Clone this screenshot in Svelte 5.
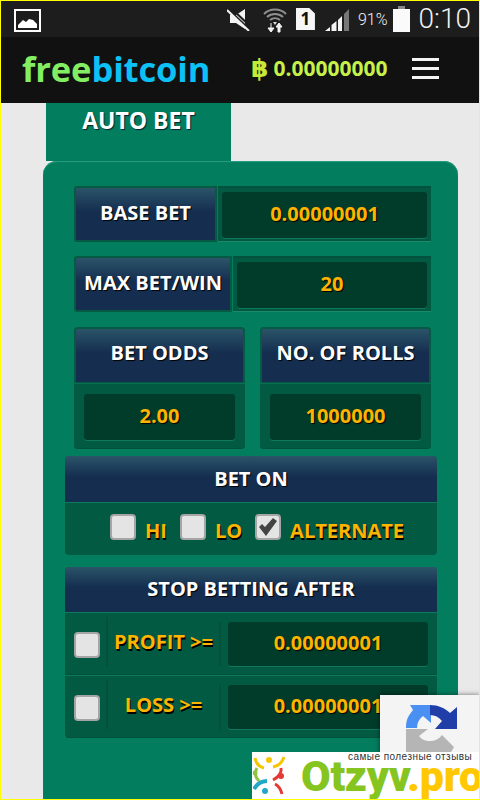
<script>
  let rows = [
    { label: 'PROFIT >=', value: '0.00000001' },
    { label: 'LOSS >=', value: '0.00000001' }
  ];
  let sides = [
    { label: 'HI', on: false },
    { label: 'LO', on: false },
    { label: 'ALTERNATE', on: true }
  ];
</script>

<div class="screen">
  <div class="status">
    <svg class="pic" width="27" height="23" viewBox="0 0 27 23">
      <rect x="1" y="1" width="25" height="21" fill="none" stroke="#fff" stroke-width="2" />
      <path d="M4 19v-3l5-5 3 2 3-3 4 1 4 4v4z" fill="#fff" />
    </svg>
    <div class="status-right">
      <svg class="mute" width="26" height="24" viewBox="0 0 26 24">
        <path d="M3 8h6l9-6v20l-9-6H3z" fill="#f4f4f4" />
        <path d="M1 2l22 21M4 1l22 21" stroke="#1d1d1d" stroke-width="2" />
        <path d="M0 3l22 21" stroke="#f4f4f4" stroke-width="2" />
      </svg>
      <svg width="24" height="27" viewBox="0 0 24 27">
        <path d="M1 8a16 16 0 0 1 22 0M4 11a12 12 0 0 1 16 0M7 14a8 8 0 0 1 10 0" fill="none" stroke="#8f8f8f" stroke-width="2" />
        <path d="M10 16h4l-2 3z" fill="#ddd" />
        <path d="M8 17v6M5 22h6l-3 4zM16 17l3 4h-2v5h-2v-5h-2z" fill="#f4f4f4" stroke="#f4f4f4" />
      </svg>
      <div class="sim">1</div>
      <svg width="24" height="25" viewBox="0 0 24 25">
        <path d="M0 24l5-4v4zM6.500 24v-6l5-4v10zM13 24v-11l4-4v15z" fill="#f4f4f4" />
        <path d="M19 24V7l5-5v22z" fill="#777" />
      </svg>
      <span class="pct">91%</span>
      <div class="battery"></div>
      <span class="clock">0:10</span>
    </div>
  </div>

  <header class="top">
    <div class="logo"><span class="free">free</span><span class="bitcoin">bitcoin</span></div>
    <div class="balance"><span class="coin">฿</span><span>0.00000000</span></div>
    <div class="burger"><i></i><i></i><i></i></div>
  </header>

  <div class="tab">AUTO BET</div>

  <main class="panel">
    <div class="line">
      <div class="head side base">BASE BET</div>
      <div class="well"><div class="field">0.00000001</div></div>
    </div>
    <div class="line">
      <div class="head side max">MAX BET/WIN</div>
      <div class="well"><div class="field">20</div></div>
    </div>
    <div class="pair">
      <div class="card">
        <div class="head tall">BET ODDS</div>
        <div class="well low"><div class="field">2.00</div></div>
      </div>
      <div class="card">
        <div class="head tall">NO. OF ROLLS</div>
        <div class="well low"><div class="field">1000000</div></div>
      </div>
    </div>

    <section class="block on">
      <div class="head wide">BET ON</div>
      <div class="choices">
        {#each sides as s}
          <div class="choice">
            <span class="box">
              {#if s.on}
                <svg width="20" height="20" viewBox="0 0 20 20"><path d="M1 10l3-3 3 3 8-9 4 3-11 15z" fill="#444" /></svg>
              {/if}
            </span>
            <span class="gold">{s.label}</span>
          </div>
        {/each}
      </div>
    </section>

    <section class="block stop">
      <div class="head wide">STOP BETTING AFTER</div>
      {#each rows as r}
        <div class="stop-row">
          <div class="tick"><span class="box"></span></div>
          <div class="gold what">{r.label}</div>
          <div class="field">{r.value}</div>
        </div>
      {/each}
    </section>
  </main>

  <div class="captcha">
    <svg width="54" height="52" viewBox="0 0 54 52">
      <path d="M2 26C2 18 4 14 9 8L6 3H27V21L19 14C15 17 13 21 13 26Z" fill="#4a90f2" />
      <path d="M26 3C34 3 41 6 46 11L53 5V27H31L38 19C35 15 31 13 26 13Z" fill="#1f3ea8" />
      <path d="M2 27H24L15 34C17 37 21 39 26 39V52H2Z" fill="#b5b5b5" />
      <path d="M26 39C31 39 35 37 38 33L50 45 46 52H26Z" fill="#b5b5b5" />
    </svg>
  </div>

  <div class="banner">
    <span class="tag">самые полезные отзывы</span>
    <svg class="people" width="34" height="40" viewBox="0 0 34 40">
      <circle cx="16" cy="4" r="3" fill="#f7c600" />
      <path d="M2 2c1 6 5 9 9 10M31 1c-2 6-6 9-11 10" fill="none" stroke="#f7c600" stroke-width="3" />
      <path d="M4 12c-3 5-2 9 2 13" fill="none" stroke="#8cc63f" stroke-width="3" />
      <circle cx="2" cy="17" r="2.500" fill="#8cc63f" />
      <path d="M1 33c3-5 8-8 13-8" fill="none" stroke="#22a7c9" stroke-width="4" />
      <circle cx="12" cy="35" r="3" fill="#22a7c9" />
      <path d="M20 24c6-3 9-8 8-12M22 28c4 2 6 6 7 10" fill="none" stroke="#e53935" stroke-width="3" />
      <circle cx="28" cy="20" r="3" fill="#e53935" />
    </svg>
    <span class="brand"><b>Otzyv</b><em>.pro</em></span>
  </div>
</div>

<style>
  :global(body) {
    margin: 0;
    background: #e9e9e9;
  }

  .screen {
    position: relative;
    width: 480px;
    height: 800px;
    overflow: hidden;
    box-sizing: border-box;
    border: 1px solid #ffff00;
    background: #e9e9e9;
    font-family: "Open Sans", "Liberation Sans", sans-serif;
    font-weight: 700;
  }

  .status {
    display: flex;
    align-items: center;
    justify-content: space-between;
    height: 36px;
    padding: 0 8px 0 13px;
    background: #1d1d1d;
    color: #f2f2f2;
  }

  .pic {
    margin-top: 2px;
  }

  .status-right {
    display: flex;
    align-items: center;
  }

  .mute {
    margin-right: 10px;
  }

  .sim {
    width: 19px;
    height: 22px;
    margin: 0 10px 0 9px;
    background: #f6f6f6;
    color: #111;
    font-size: 17px;
    line-height: 22px;
    text-align: center;
    clip-path: polygon(0 0, 70% 0, 100% 25%, 100% 100%, 0 100%);
  }

  .pct {
    margin-left: 9px;
    font-family: "Roboto", sans-serif;
    font-weight: 300;
    font-size: 16px;
  }

  .battery {
    position: relative;
    width: 17px;
    height: 23px;
    margin: 3px 9px 0 5px;
    background: #fafafa;
  }

  .battery::before {
    content: "";
    position: absolute;
    left: 5px;
    top: -3px;
    width: 7px;
    height: 3px;
    background: #888;
  }

  .clock {
    font-family: "Roboto", sans-serif;
    font-weight: 300;
    font-size: 28px;
    line-height: 30px;
  }

  .top {
    display: flex;
    align-items: center;
    height: 66px;
    padding: 0 40px 0 21px;
    background: #111;
  }

  .logo {
    flex: none;
    width: 229px;
    font-weight: 700;
    font-size: 34.500px;
    letter-spacing: -0.1px;
    margin-top: -3px;
  }

  .free {
    color: #84ee62;
  }

  .bitcoin {
    color: #0cc1f6;
  }

  .balance {
    display: flex;
    align-items: center;
    gap: 5px;
    color: #c6f04a;
    font-size: 21px;
    white-space: nowrap;
    margin-top: -4px;
  }

  .coin {
    font-family: "DejaVu Sans", sans-serif;
    font-weight: 700;
    font-size: 25px;
    line-height: 25px;
    color: #c6e838;
  }

  .burger {
    display: flex;
    flex-direction: column;
    gap: 6px;
    margin-left: 25px;
    margin-top: -3px;
  }

  .burger i {
    display: block;
    width: 27px;
    height: 3px;
    background: #f4f4f4;
  }

  .tab {
    box-sizing: border-box;
    width: 185px;
    height: 58px;
    margin-left: 45px;
    padding-top: 1px;
    background: #027e5f;
    color: #fff;
    font-size: 23px;
    font-weight: 700;
    text-align: center;
    text-shadow: 1px 1px 1px #023;
  }

  .panel {
    box-sizing: border-box;
    width: 415px;
    height: 640px;
    margin-left: 42px;
    padding: 25px 21px 0 22px;
    background: #027e5f;
    border-radius: 14px 14px 0 0;
    box-shadow: inset 0 1px 1px #2a9d80;
  }

  .line {
    display: flex;
    height: 56px;
    margin: 0 6px 0 9px;
  }

  .line + .line {
    margin: 14px 6px 15px 9px;
  }

  .head {
    display: flex;
    align-items: center;
    justify-content: center;
    box-sizing: border-box;
    padding-bottom: 3px;
    background: linear-gradient(#2a5468, #152e50 45%);
    color: #fff;
    font-size: 20px;
    font-weight: 700;
    text-shadow: 1px 1px 1px #000;
    border: 1px solid #045a43;
  }

  .side {
    flex: none;
    border-radius: 3px 0 0 3px;
    border-width: 2px;
  }

  .base {
    width: 143px;
    margin-right: 1px;
  }

  .max {
    width: 158px;
    margin-right: 1px;
  }

  .well {
    flex: 1;
    display: flex;
    box-sizing: border-box;
    padding: 4px 4px 3px;
    background: #035a42;
    border-top: 2px solid #03523d;
    border-bottom: 1px solid #1b8a6c;
  }

  .field {
    flex: 1;
    display: flex;
    align-items: center;
    justify-content: center;
    box-sizing: border-box;
    padding-bottom: 3px;
    background: #013c2a;
    border-radius: 3px;
    color: #fdb400;
    font-size: 20px;
    font-weight: 700;
    text-shadow: 1px 1px 1px #000;
    box-shadow: 0 1px 0 #10785c;
  }

  .pair {
    display: flex;
    gap: 15px;
    margin: 0 6px 7px 9px;
  }

  .card {
    flex: 1;
    display: flex;
    flex-direction: column;
    height: 122px;
    border-radius: 3px;
    overflow: hidden;
  }

  .tall {
    height: 56px;
    padding-bottom: 7px;
    border-width: 2px 2px 1px;
    border-radius: 3px 3px 0 0;
  }

  .low {
    padding: 10px 10px 8px;
    border-top: 1px solid #0a6e53;
    border-radius: 0 0 3px 3px;
    border-bottom: 1px solid #03503b;
  }

  .block {
    width: 372px;
    border-radius: 4px;
    overflow: hidden;
    background: #035a42;
  }

  .on {
    height: 99px;
    margin-bottom: 12px;
  }

  .wide {
    border: 0;
  }

  .on .wide {
    height: 46px;
    padding-bottom: 1px;
  }

  .stop .wide {
    height: 45px;
  }

  .choices {
    display: flex;
    justify-content: center;
    gap: 13px;
    padding: 11px 0 0 12px;
    border-top: 1px solid #0c7a5c;
  }

  .choice {
    display: flex;
    gap: 9px;
  }

  .box {
    flex: none;
    display: flex;
    align-items: center;
    justify-content: center;
    box-sizing: border-box;
    width: 26px;
    height: 26px;
    background: #e4e4e4;
    border: 2px solid #a5a5a5;
    border-radius: 4px;
  }

  .gold {
    color: #fdb400;
    font-size: 20px;
    font-weight: 700;
    line-height: 27px;
    margin-top: 3px;
    text-shadow: 1px 2px 0 #000;
  }

  .stop-row {
    display: flex;
    height: 63px;
    box-sizing: border-box;
    border-top: 1px solid #0c7a5c;
    border-bottom: 1px solid #03503b;
    padding: 9px 9px 8px 0;
  }

  .stop-row:first-of-type {
    height: 64px;
  }

  .tick {
    flex: none;
    display: flex;
    align-items: center;
    width: 43px;
    padding-left: 9px;
    box-sizing: border-box;
    margin-top: -5px;
    border-right: 2px solid #03503b;
  }

  .tick .box {
    margin-top: 7px;
  }

  .what {
    flex: none;
    width: 111px;
    margin-top: 0;
    padding-top: 6px;
    text-align: center;
    white-space: nowrap;
    border-right: 2px solid #03503b;
  }

  .stop-row .field {
    margin-left: 7px;
  }

  .captcha {
    position: absolute;
    left: 379px;
    top: 694px;
    width: 100px;
    height: 70px;
    padding: 7px 0 0 24px;
    box-sizing: border-box;
    background: #f4f4f4;
    box-shadow: 0 0 5px #0008;
  }

  .banner {
    position: absolute;
    left: 251px;
    top: 751px;
    width: 228px;
    height: 47px;
    background: #fff;
  }

  .tag {
    position: absolute;
    left: 96px;
    top: 0;
    color: #333;
    font-family: "Liberation Sans", sans-serif;
    font-weight: 400;
    font-size: 10px;
    line-height: 9px;
    letter-spacing: 0.45px;
    white-space: nowrap;
  }

  .people {
    position: absolute;
    left: 1px;
    top: 4px;
  }

  .brand {
    position: absolute;
    left: 49px;
    top: 9px;
    font-family: "Roboto", sans-serif;
    font-weight: 900;
    font-size: 43px;
    line-height: 30px;
    letter-spacing: -0.3px;
    white-space: nowrap;
  }

  .brand b {
    color: #86c51f;
    font-weight: 900;
  }

  .brand em {
    color: #ffc800;
    font-style: normal;
  }
</style>
